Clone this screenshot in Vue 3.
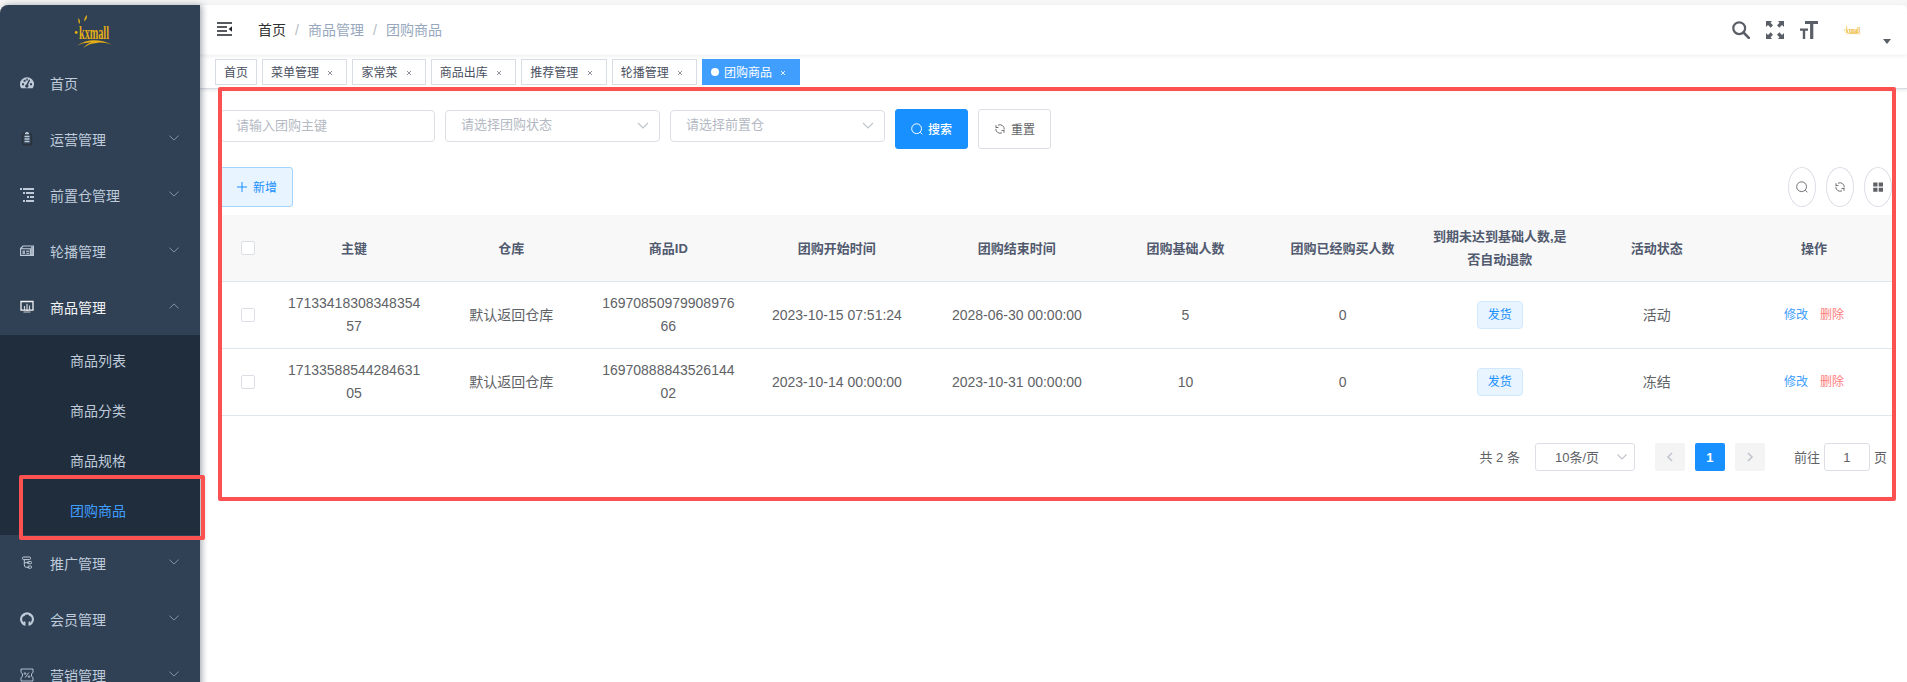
<script setup>
import { ref } from 'vue'

// 14x14 icons, drawn with currentColor
const icons = {
  dashboard: '<path fill="currentColor" fill-rule="evenodd" d="M7 1.2a7 7 0 0 0-7 7c0 1.6.5 3 1.3 4.1h11.4A7 7 0 0 0 14 8.200a7 7 0 0 0-7-7zM2 7.200h2v2H2zM3.600 3.800h2v2h-2zM6.300 2.400h1.500v2H6.300zM10 7.200h2v2h-2zM9 3.500l1.200.5-2.200 5a1.600 1.600 0 1 1-1.600-.5z"/>',
  clipboard: '<rect x="2.500" y="1.800" width="9" height="11" rx="1.500" fill="none" stroke="#2b2f36" stroke-width="1.300"/><path d="M5 1.500h4M4.500 4.500h5M4.500 7h5M4.500 9.500h5" stroke="currentColor" stroke-width="1.300"/><path d="M6 .4h2" stroke="currentColor"/>',
  tree: '<path fill="currentColor" d="M0 0h2v2H0zM3 0h11v2H3zM3 4h2v2H3zM6 4h8v2H6zM7 8h2v2H7zM10 8h4v2h-4zM3 12h2v2H3zM6 12h8v2H6z"/>',
  banner: '<path fill="none" stroke="currentColor" stroke-width="1.100" d="M.6 4.500L3 2h10.400v9.400H.6zM.6 4.700h9.800v6.700"/><path fill="currentColor" d="M11 2.500h2.500v9H11zM2.500 6.500H5V10H2.500zM6.200 6.500h3V8h-3zM6.200 8.700h3v1.500h-3z" opacity=".8"/>',
  monitor: '<path fill="none" stroke="currentColor" stroke-width="1.300" d="M1 1.500h12v8.700H1z"/><path fill="none" stroke="currentColor" stroke-width="1.200" d="M4.500 6v4M7 3.800V11M9.500 5.500v4.500M3.500 12h7" opacity=".8"/>',
  flow: '<g fill="none" stroke="currentColor" stroke-width="1"><rect x="2.500" y="1" width="8" height="2.600" rx="1"/><path d="M4.300 3.600v5.200q0 2.500 2 2.500H9M4.300 6.700H9"/><rect x="7.500" y="5.500" width="4" height="2.200" rx=".8"/><rect x="8" y="10" width="3.500" height="2.200" rx=".8"/></g>',
  github: '<path fill="none" stroke="currentColor" stroke-width="2.100" d="M4.700 12.700A5.900 5.900 0 1 1 9.300 12.700"/><path fill="currentColor" d="M3 1.700l2.300 1.500-2 1.500zM11 1.700L8.700 3.200l2 1.500zM3.700 9l1.800 1v3.700l-1.500-.5zM10.300 9l-1.800 1v3.700l1.500-.5zM2.300 9.600l2.700 1.600v.9q-2 0-2.700-2.500z"/>',
  coupon: '<g fill="none" stroke="currentColor" stroke-width=".9"><path d="M1 1h12v3.500l-1.500 1.200v2.600L13 9.500V13H1V9.500l1.500-1.200V5.700L1 4.500zM8.800 4.500l-3.600 5"/><circle cx="5" cy="5.500" r=".8"/><circle cx="9" cy="8.600" r=".8"/></g>'
}

const menus = [
  { title: '首页', icon: 'dashboard' },
  { title: '运营管理', icon: 'clipboard', arrow: true },
  { title: '前置仓管理', icon: 'tree', arrow: true },
  { title: '轮播管理', icon: 'banner', arrow: true },
  {
    title: '商品管理',
    icon: 'monitor',
    arrow: true,
    open: true,
    children: ['商品列表', '商品分类', '商品规格', '团购商品']
  },
  { title: '推广管理', icon: 'flow', arrow: true },
  { title: '会员管理', icon: 'github', arrow: true },
  { title: '营销管理', icon: 'coupon', arrow: true }
]
const activeMenu = ref('团购商品')

const tags = ['首页', '菜单管理', '家常菜', '商品出库', '推荐管理', '轮播管理', '团购商品']

const columns = ['主键', '仓库', '商品ID', '团购开始时间', '团购结束时间', '团购基础人数', '团购已经购买人数', '到期未达到基础人数,是否自动退款', '活动状态', '操作']

const rows = [
  {
    id: '1713341830834835457',
    store: '默认返回仓库',
    productId: '1697085097990897666',
    begin: '2023-10-15 07:51:24',
    end: '2028-06-30 00:00:00',
    base: 5,
    bought: 0,
    refund: '发货',
    status: '活动'
  },
  {
    id: '1713358854428463105',
    store: '默认返回仓库',
    productId: '1697088884352614402',
    begin: '2023-10-14 00:00:00',
    end: '2023-10-31 00:00:00',
    base: 10,
    bought: 0,
    refund: '发货',
    status: '冻结'
  }
]

const queryId = ref('')
const page = ref(1)
</script>

<template>
  <div class="app-wrapper">
    <aside class="sidebar">
      <div class="logo">
        <svg width="38" height="36" viewBox="0 0 38 36">
          <g fill="#e6ae14">
            <path d="M4.500 5q2 2 1.200 6-2-2-1.200-6zM13 2q.4 3.500-2.700 6.500Q10 4.500 13 2z" />
            <circle cx="2.200" cy="19.500" r="1.400" />
            <path d="M3 32.500Q19 22.500 38 31.800 29 28.500 21 30.200 14 31 9.500 35q3-4.500 8-5.500Q10 29 3 32.500z" />
            <text x="5" y="26" font-size="18.500" font-weight="bold" textLength="30" lengthAdjust="spacingAndGlyphs">kxmall</text>
          </g>
        </svg>
      </div>
      <template v-for="menu in menus" :key="menu.title">
        <div class="menu-item" :class="{ opened: menu.open }">
          <svg class="menu-icon" viewBox="0 0 14 14" v-html="icons[menu.icon]"></svg>
          <span>{{ menu.title }}</span>
          <svg v-if="menu.arrow" class="menu-arrow" :class="{ up: menu.open }" viewBox="0 0 10 6">
            <path d="M.5 .6L5 5.100 9.500.6" fill="none" stroke="currentColor" />
          </svg>
        </div>
        <div v-if="menu.children" class="submenu">
          <div v-for="child in menu.children" :key="child" class="submenu-item" :class="{ active: child === activeMenu }">
            {{ child }}
          </div>
        </div>
      </template>
    </aside>

    <div class="main-container">
      <header class="navbar">
        <svg class="hamburger" viewBox="0 0 17 14">
          <path d="M1 1h15M1 5h10M1 9h10M1 13h15" stroke="#1f2329" stroke-width="1.700" />
          <path d="M16 4.300v5.400L12.600 7z" fill="#1f2329" />
        </svg>
        <div class="breadcrumb">
          <span class="home">首页</span><i>/</i><span>商品管理</span><i>/</i><span>团购商品</span>
        </div>
        <div class="right-menu">
          <svg width="18" height="18" viewBox="0 0 18 18">
            <circle cx="7.200" cy="7.200" r="5.900" fill="none" stroke="#5a5e66" stroke-width="2.200" />
            <path d="M11.500 11.500l5.300 5.300" stroke="#5a5e66" stroke-width="2.600" stroke-linecap="round" />
          </svg>
          <svg width="18" height="18" viewBox="0 0 18 18">
            <path d="M0 0h6L4.500 1.700 7 4.300 4.700 6.700 2 4 0 6zM18 0v6l-2-2-2.700 2.700L11 4.300l2.500-2.600L12 0zM0 18v-6l2 2 2.700-2.700L7 13.700l-2.500 2.600L6 18zM18 18h-6l1.500-1.700-2.500-2.600 2.300-2.400L16 14l2-2z" fill="#5a5e66" />
          </svg>
          <svg width="18" height="18" viewBox="0 0 18 18">
            <path d="M5 0h13v3h-4.700v15h-3.200V3H5zM0 7.500h8v2.200H5.200V18H2.800V9.700H0z" fill="#5a5e66" />
          </svg>
          <div class="avatar">
            <svg width="20" height="12" viewBox="0 0 20 12">
              <g fill="#ecb52b">
                <text x="4" y="9" font-size="8" font-weight="bold" textLength="14" lengthAdjust="spacingAndGlyphs">kxmall</text>
                <path d="M3 10.300q8-2 17 0-9-.6-17 0zM2 5.500h1.200v1H2zM4.500 1l.8 2-.9-.5z" />
              </g>
            </svg>
            <i class="caret"></i>
          </div>
        </div>
      </header>

      <div class="tags-view">
        <span v-for="(tag, i) in tags" :key="tag" class="tag" :class="{ active: tag === activeMenu }">
          {{ tag }}
          <svg v-if="i > 0" class="close" viewBox="0 0 6 6">
            <path d="M1 1l4 4M5 1L1 5" stroke="currentColor" />
          </svg>
        </span>
      </div>

      <main class="app-main">
        <div class="query-form">
          <input v-model="queryId" class="field" placeholder="请输入团购主键" />
          <div class="field select">
            请选择团购状态
            <svg viewBox="0 0 12 8"><path d="M1 1l5 5 5-5" fill="none" stroke="#c0c4cc" stroke-width="1.200" /></svg>
          </div>
          <div class="field select">
            请选择前置仓
            <svg viewBox="0 0 12 8"><path d="M1 1l5 5 5-5" fill="none" stroke="#c0c4cc" stroke-width="1.200" /></svg>
          </div>
          <button class="btn primary">
            <svg viewBox="0 0 12 12"><path d="M9.300 9.300l2 2M10.500 5.700a4.900 4.900 0 1 1-9.800 0 4.900 4.900 0 0 1 9.800 0z" fill="none" stroke="currentColor" /></svg>
            <span>搜索</span>
          </button>
          <button class="btn">
            <svg viewBox="0 0 12 12"><path d="M2 5V2.200M2 4.500h2.500M4 2.200a4.300 4.300 0 0 1 6.200 4.300M10 7v2.800M10 7.500H7.500M8 9.800A4.300 4.300 0 0 1 1.800 5.800" fill="none" stroke="currentColor" stroke-width=".9" /></svg>
            <span>重置</span>
          </button>
        </div>

        <div class="toolbar">
          <button class="btn plain">
            <svg viewBox="0 0 12 12"><path d="M6 1v10M1 6h10" stroke="currentColor" /></svg>
            <span>新增</span>
          </button>
          <div class="right-toolbar">
            <button class="circle">
              <svg viewBox="0 0 12 12"><path d="M9.300 9.300l2 2M10.500 5.700a4.900 4.900 0 1 1-9.800 0 4.900 4.900 0 0 1 9.800 0z" fill="none" stroke="currentColor" stroke-width=".9" /></svg>
            </button>
            <button class="circle">
              <svg viewBox="0 0 12 12"><path d="M2 5V2.200M2 4.500h2.500M4 2.200a4.300 4.300 0 0 1 6.200 4.300M10 7v2.800M10 7.500H7.500M8 9.800A4.300 4.300 0 0 1 1.800 5.800" fill="none" stroke="currentColor" stroke-width=".9" /></svg>
            </button>
            <button class="circle">
              <svg viewBox="0 0 12 12"><path d="M1.200 1.500h4.300v4H1.200zM6.700 1.500H11v4H6.700zM1.200 6.700h4.300v4H1.200zM6.700 6.700H11v4H6.700z" fill="currentColor" /></svg>
            </button>
          </div>
        </div>

        <table class="table">
          <colgroup>
            <col class="col-check" />
            <col span="3" />
            <col class="col-time" span="2" />
            <col span="5" />
          </colgroup>
          <thead>
            <tr>
              <th><span class="checkbox"></span></th>
              <th v-for="col in columns" :key="col">{{ col }}</th>
            </tr>
          </thead>
          <tbody>
            <tr v-for="row in rows" :key="row.id">
              <td><span class="checkbox"></span></td>
              <td>{{ row.id }}</td>
              <td>{{ row.store }}</td>
              <td>{{ row.productId }}</td>
              <td>{{ row.begin }}</td>
              <td>{{ row.end }}</td>
              <td>{{ row.base }}</td>
              <td>{{ row.bought }}</td>
              <td><span class="el-tag">{{ row.refund }}</span></td>
              <td>{{ row.status }}</td>
              <td>
                <div class="actions"><a class="edit">修改</a><a class="remove">删除</a></div>
              </td>
            </tr>
          </tbody>
        </table>

        <div class="pagination">
          <span class="total">共 {{ rows.length }} 条</span>
          <div class="size-select">
            <span>10条/页</span>
            <svg viewBox="0 0 12 8"><path d="M1.500 1.500L6 6l4.500-4.500" fill="none" stroke="#c0c4cc" stroke-width="1.100" /></svg>
          </div>
          <button class="pager">
            <svg viewBox="0 0 8 10"><path d="M6 1L2 5l4 4" fill="none" stroke="currentColor" stroke-width="1.600" /></svg>
          </button>
          <button class="pager current">1</button>
          <button class="pager">
            <svg viewBox="0 0 8 10"><path d="M2 1l4 4-4 4" fill="none" stroke="currentColor" stroke-width="1.600" /></svg>
          </button>
          <span class="jump"><span>前往</span><input v-model="page" /><span>页</span></span>
        </div>
      </main>
    </div>

    <div class="mark mark-menu"></div>
    <div class="mark mark-content"></div>
  </div>
</template>

<style>
body {
  margin: 0;
  overflow: hidden;
}
</style>

<style scoped>
* {
  box-sizing: border-box;
}

.app-wrapper {
  position: relative;
  display: flex;
  height: 682px;
  padding-top: 5px;
  overflow: hidden;
  background: #f6f6f6;
  font-family: "Liberation Sans", "Noto Sans CJK SC", sans-serif;
  font-size: 14px;
  color: #606266;
}

button,
input {
  font-family: inherit;
}

i {
  font-style: normal;
}

/* sidebar */
.sidebar {
  position: relative;
  z-index: 2;
  flex: none;
  width: 200px;
  height: 700px;
  background: #304156;
  border-top-left-radius: 8px;
  box-shadow: 2px 0 6px rgba(0, 21, 41, 0.35);
  color: #bfcbd9;
}

.logo {
  height: 50px;
  padding: 8px 0 0 74px;
}

.logo svg,
.avatar svg {
  display: block;
  overflow: visible;
}

svg text {
  font-family: "Liberation Serif", serif;
}

.menu-item {
  display: flex;
  align-items: center;
  height: 56px;
  padding: 0 21px 0 20px;
}

.menu-item.opened {
  color: #f4f4f5;
}

.menu-icon {
  width: 14px;
  height: 14px;
  margin-right: 16px;
}

.menu-arrow {
  width: 10px;
  height: 6px;
  margin: -2px 0 0 auto;
  color: #8791a0;
}

.menu-arrow.up {
  transform: rotate(180deg);
}

.submenu {
  background: #1f2d3d;
}

.submenu-item {
  height: 50px;
  padding-left: 70px;
  line-height: 53px;
}

.submenu-item.active {
  color: #409eff;
}

/* navbar */
.main-container {
  flex: 1;
  min-width: 0;
  background: #fff;
  border-top-right-radius: 6px;
}

.navbar {
  display: flex;
  align-items: center;
  height: 50px;
  padding: 0 15px 0 16px;
  box-shadow: 0 1px 4px rgba(0, 21, 41, 0.08);
}

.hamburger {
  width: 17px;
  height: 14px;
  margin: -2px 25px 0 0;
}

.breadcrumb {
  display: flex;
  align-items: baseline;
  margin-top: -2px;
  color: #97a8be;
}

.breadcrumb .home {
  color: #303133;
}

.breadcrumb i {
  width: 22px;
  text-align: center;
  color: #b4bbc6;
}

.right-menu {
  display: flex;
  align-items: center;
  gap: 16px;
  margin-left: auto;
}

.avatar {
  display: flex;
  align-items: center;
  width: 50px;
  height: 18px;
  margin-left: 8px;
}

.caret {
  margin: 22px 0 0 21px;
  border: 4px solid transparent;
  border-top: 5px solid #5a5e66;
  border-bottom: 0;
}

.tags-view {
  display: flex;
  gap: 5px;
  height: 34px;
  padding: 4px 15px 0;
  border-bottom: 1px solid #d8dce5;
  box-shadow: 0 1px 3px rgba(0, 0, 0, 0.12);
}

.tag {
  display: flex;
  align-items: center;
  height: 26px;
  padding: 0 8px 2px;
  border: 1px solid #d8dce5;
  font-size: 12px;
  color: #495060;
}

.tag .close {
  width: 6px;
  height: 6px;
  margin: 3px 5px 0 8.400px;
  color: #8f949c;
}

.tag.active {
  border-color: #409eff;
  background: #409eff;
  color: #fff;
}

.tag.active .close {
  color: #e0efff;
}

.tag.active::before {
  content: "";
  width: 8px;
  height: 8px;
  margin: 2px 5px 0 0;
  border-radius: 50%;
  background: #fff;
}

/* query form */
.app-main {
  padding: 20px 15px 0 20px;
}

.query-form {
  display: flex;
  gap: 10px;
  height: 58px;
}

.field {
  width: 215px;
  height: 32px;
  margin-top: 1px;
  padding: 0 15px 2px;
  border: 1px solid #dcdfe6;
  border-radius: 4px;
  background: #fff;
  font-size: 13px;
  line-height: 28px;
  color: #b4b9c3;
  outline: none;
}

.field::placeholder {
  color: #b4b9c3;
}

.select {
  display: flex;
  justify-content: space-between;
}

.select svg {
  width: 12px;
  height: 8px;
  margin: 11px -5px 0 0;
}

.btn {
  display: flex;
  align-items: center;
  justify-content: center;
  gap: 5px;
  width: 73px;
  height: 40px;
  padding: 0;
  border: 1px solid #dcdfe6;
  border-radius: 3px;
  background: #fff;
  font-size: 12px;
  color: #606266;
}

.btn span {
  margin-top: -2px;
}

.btn svg,
.circle svg {
  width: 12px;
  height: 12px;
}

.btn.primary {
  border-color: #1890ff;
  background: #1890ff;
  font-weight: 500;
  color: #fff;
}

.btn.plain {
  border-color: #a3d3ff;
  background: #e8f4ff;
  color: #1890ff;
}

.toolbar {
  display: flex;
  justify-content: space-between;
  height: 48px;
}

.right-toolbar {
  display: flex;
  gap: 10px;
}

.circle {
  display: flex;
  align-items: center;
  justify-content: center;
  width: 28px;
  height: 40px;
  padding: 0;
  border: 1px solid #dcdfe6;
  border-radius: 50%;
  background: #fff;
  color: #606266;
}

/* table */
.table {
  width: 100%;
  table-layout: fixed;
  border-collapse: separate;
  border-spacing: 0;
}

.col-check {
  width: 55px;
}

.col-time {
  width: 180px;
}

th,
td {
  height: 67px;
  padding: 0 10px 0 11px;
  border-bottom: 1px solid #dfe6ec;
  text-align: center;
  line-height: 23px;
  word-break: break-all;
}

th {
  background: #f8f8f9;
  font-size: 13px;
  color: #515a6e;
}

.checkbox {
  display: block;
  width: 14px;
  height: 14px;
  margin: 0 auto;
  border: 1px solid #dcdfe6;
  border-radius: 2px;
  background: #fff;
}

.el-tag {
  display: block;
  width: 46px;
  height: 28px;
  margin: 0 auto;
  border: 1px solid #d1e9ff;
  border-radius: 4px;
  background: #e8f4ff;
  font-size: 12px;
  line-height: 26px;
  color: #1890ff;
}

.actions {
  display: flex;
  justify-content: center;
  gap: 12px;
  padding-top: 1px;
  font-size: 12px;
}

.edit {
  color: #409eff;
}

.remove {
  color: #ff7b7b;
}

/* pagination */
.pagination {
  display: flex;
  align-items: center;
  justify-content: flex-end;
  height: 28px;
  margin-top: 27px;
  padding-right: 5px;
  font-size: 13px;
}

.pagination span {
  margin-top: -1px;
}

.size-select {
  display: flex;
  align-items: center;
  justify-content: space-between;
  width: 100px;
  height: 28px;
  margin: 0 20px 0 15px;
  padding: 0 6px 1px 19px;
  border: 1px solid #dcdfe6;
  border-radius: 3px;
}

.size-select svg {
  width: 12px;
  height: 8px;
}

.pager {
  width: 30px;
  height: 28px;
  margin-right: 10px;
  padding: 0;
  border: 0;
  border-radius: 2px;
  background: #f4f4f5;
  font-size: 13px;
  font-weight: bold;
  color: #c0c4cc;
}

.pager svg {
  width: 8px;
  height: 10px;
}

.pager.current {
  background: #1890ff;
  color: #fff;
}

.pagination .jump {
  display: flex;
  align-items: center;
  margin: 0 0 0 19px;
}

.jump input {
  width: 46px;
  height: 28px;
  margin: 0 4px;
  padding: 0;
  border: 1px solid #dcdfe6;
  border-radius: 3px;
  font-size: 13px;
  text-align: center;
  color: #606266;
}

/* highlight frames over the page */
.mark {
  position: absolute;
  z-index: 3;
  border: 4px solid #fc5151;
  border-radius: 2px;
  pointer-events: none;
}

.mark-menu {
  top: 475px;
  left: 19px;
  width: 186px;
  height: 65px;
}

.mark-content {
  top: 87px;
  left: 218px;
  width: 1678px;
  height: 414px;
}
</style>
